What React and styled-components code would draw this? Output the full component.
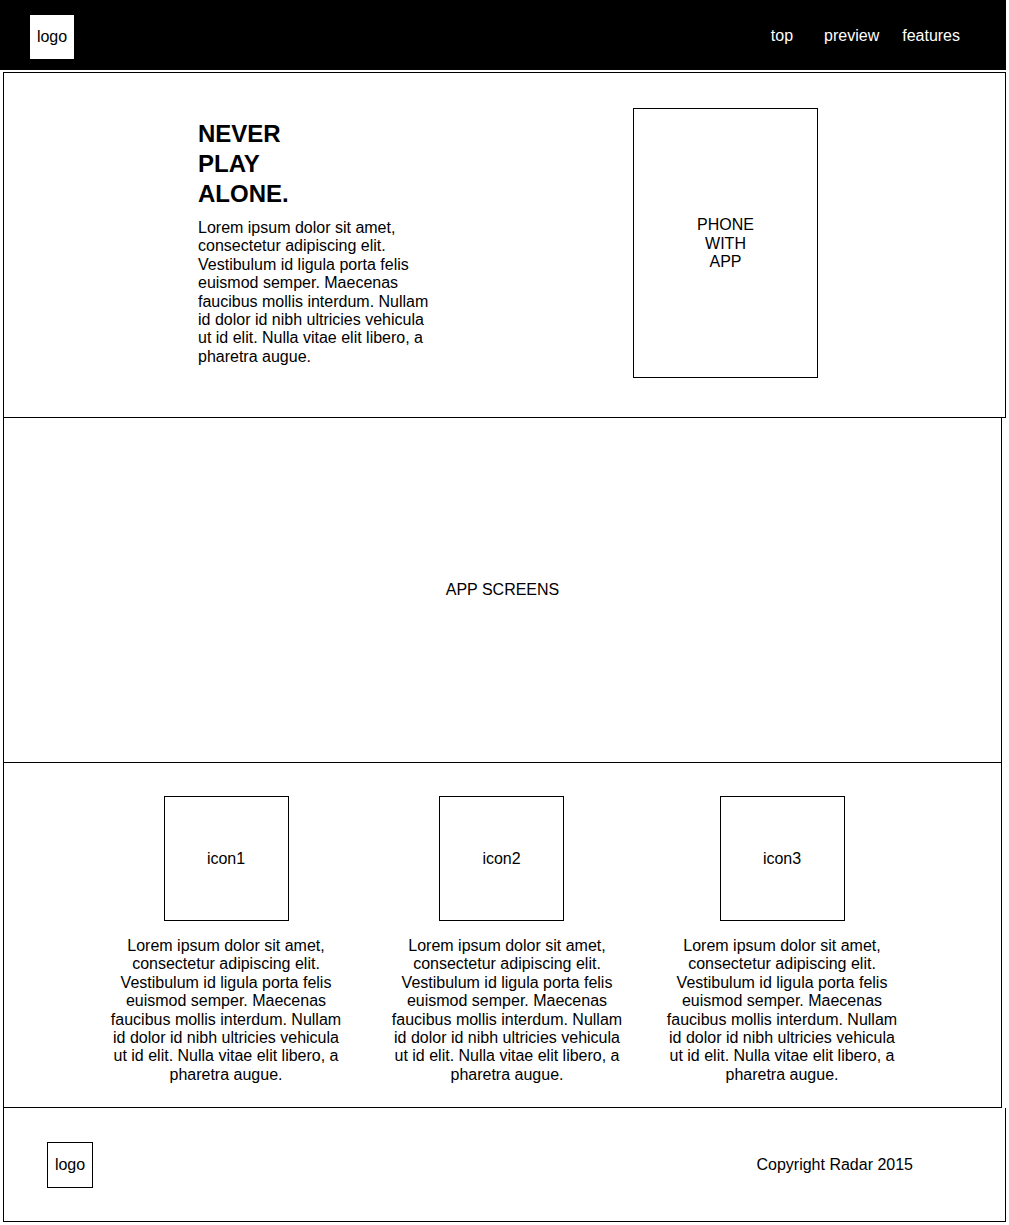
import React from "react";
import styled, { createGlobalStyle } from "styled-components";

const Global = createGlobalStyle`
  html, body { margin: 0; padding: 0; background: #fff; }
  body { font-family: "Liberation Sans", Arial, Helvetica, sans-serif; color: #000; }
  * { box-sizing: border-box; }
`;

const Page = styled.div`
  width: 1009px;
  display: flex;
  flex-direction: column;
`;

const Header = styled.header`
  width: 1006px;
  height: 70px;
  background: #000;
  display: flex;
  align-items: center;
  justify-content: space-between;
  padding: 0 46px 0 30px;
  margin-bottom: 2px;
`;

const HeaderLogo = styled.div`
  width: 44px;
  height: 44px;
  margin-top: 4px;
  background: #fff;
  display: flex;
  align-items: center;
  justify-content: center;
  font-size: 16px;
`;

const Nav = styled.nav`
  display: flex;
  align-items: center;
  margin-top: 1px;
`;

const NavLink = styled.a`
  color: #fff;
  font-size: 16px;
  text-decoration: none;
  margin-left: ${(p) => p.$gap}px;
`;

const Section = styled.section`
  width: ${(p) => p.$width}px;
  height: ${(p) => p.$height}px;
  margin-left: 3px;
  border: 1px solid #000;
  border-top-width: ${(p) => (p.$top ? 1 : 0)}px;
`;

const Hero = styled(Section)`
  display: flex;
  align-items: flex-start;
  padding: 35px 0 0 194px;
`;

const HeroText = styled.div`
  width: 240px;
  padding-top: 11px;
`;

const Title = styled.h1`
  margin: 0;
  font-size: 24px;
  font-weight: 700;
  line-height: 30px;
`;

const Para = styled.p`
  margin: ${(p) => (p.$center ? "0" : "10px 0 0")};
  font-size: 16px;
  line-height: 18.4px;
  text-align: ${(p) => (p.$center ? "center" : "left")};
`;

const Phone = styled.div`
  margin-left: 195px;
  width: 185px;
  height: 270px;
  border: 1px solid #000;
  display: flex;
  align-items: center;
  justify-content: center;
  text-align: center;
  font-size: 16px;
  line-height: 18.4px;
  padding-top: 2px;
`;

const Screens = styled(Section)`
  display: flex;
  align-items: center;
  justify-content: center;
  font-size: 16px;
`;

const Features = styled(Section)`
  display: flex;
  align-items: flex-start;
  padding: 33px 0 0 102px;
  gap: 38px;
`;

const Feature = styled.div`
  width: 240px;
  display: flex;
  flex-direction: column;
  align-items: center;
  gap: 16px;
  margin: 0 ${(p) => -p.$offset}px 0 ${(p) => p.$offset}px;
`;

const IconBox = styled.div`
  width: 125px;
  height: 125px;
  border: 1px solid #000;
  display: flex;
  align-items: center;
  justify-content: center;
  font-size: 16px;
  margin-right: ${(p) => p.$shift}px;
`;

const Footer = styled(Section)`
  display: flex;
  align-items: center;
  justify-content: space-between;
  padding: 0 92px 0 43px;
`;

const FooterLogo = styled.div`
  width: 46px;
  height: 46px;
  border: 1px solid #000;
  display: flex;
  align-items: center;
  justify-content: center;
  font-size: 16px;
`;

const Copy = styled.div`
  font-size: 16px;
`;

const lorem =
  "Lorem ipsum dolor sit amet, consectetur adipiscing elit. Vestibulum id ligula porta felis euismod semper. Maecenas faucibus mollis interdum. Nullam id dolor id nibh ultricies vehicula ut id elit. Nulla vitae elit libero, a pharetra augue.";

const features = [
  { name: "icon1", offset: 0, shift: 0 },
  { name: "icon2", offset: 3, shift: 11 },
  { name: "icon3", offset: 0, shift: 0 },
];

export default function App() {
  return (
    <Page>
      <Global />
      <Header>
        <HeaderLogo>logo</HeaderLogo>
        <Nav>
          <NavLink $gap={0}>top</NavLink>
          <NavLink $gap={31}>preview</NavLink>
          <NavLink $gap={23}>features</NavLink>
        </Nav>
      </Header>
      <Hero $width={1003} $height={346} $top>
        <HeroText>
          <Title>
            NEVER
            <br />
            PLAY
            <br />
            ALONE.
          </Title>
          <Para>{lorem}</Para>
        </HeroText>
        <Phone>
          PHONE
          <br />
          WITH
          <br />
          APP
        </Phone>
      </Hero>
      <Screens $width={999} $height={345}>APP SCREENS</Screens>
      <Features $width={999} $height={345}>
        {features.map((f) => (
          <Feature key={f.name} $offset={f.offset}>
            <IconBox $shift={f.shift}>{f.name}</IconBox>
            <Para $center>{lorem}</Para>
          </Feature>
        ))}
      </Features>
      <Footer $width={1003} $height={114}>
        <FooterLogo>logo</FooterLogo>
        <Copy>Copyright Radar 2015</Copy>
      </Footer>
    </Page>
  );
}
